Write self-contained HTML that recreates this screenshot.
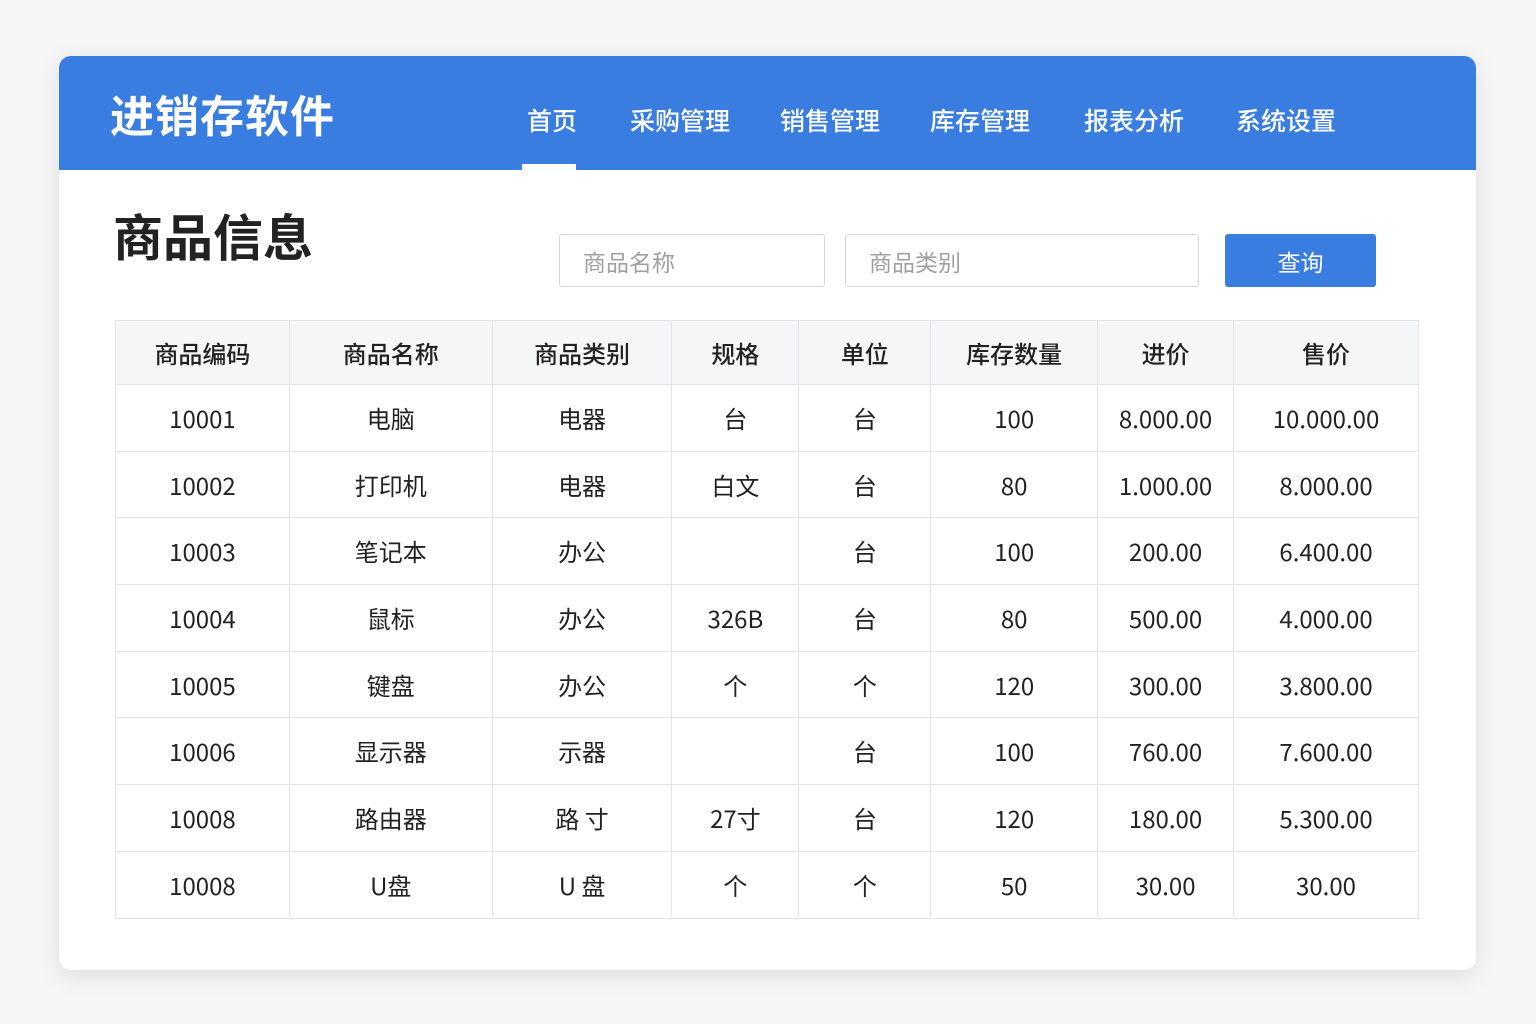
<!DOCTYPE html>
<html><head><meta charset="utf-8">
<style>
*{margin:0;padding:0;box-sizing:border-box}
body{width:1536px;height:1024px;background:#f6f6f6;font-family:"Noto Sans CJK SC","Liberation Sans",sans-serif;position:relative;overflow:hidden}
.card{position:absolute;left:59px;top:56px;width:1417px;height:914px;background:#fff;border-radius:12px;box-shadow:0 6px 24px rgba(0,0,0,.10);overflow:hidden}
.hdr{position:absolute;left:0;top:0;width:100%;height:114px;background:#3a7de0}
.logo{position:absolute;left:51px;top:28px;color:#fff;font-size:44px;font-weight:bold;letter-spacing:1px;line-height:58px}
.nav{position:absolute;top:46px;color:#fff;font-size:25px;line-height:36px;font-weight:500}
.ul{position:absolute;left:463px;top:108px;width:54px;height:6px;background:#fff}
h1{position:absolute;left:54px;top:146px;font-size:50px;line-height:66px;font-weight:bold;color:#222}
.inp{position:absolute;top:178px;height:53px;border:1px solid #d4d7dc;border-radius:3px;font-size:23px;color:#a0a0a0;padding-left:23px;line-height:53px}
.btn{position:absolute;left:1166px;top:178px;width:151px;height:53px;background:#3a7de0;border-radius:3px;color:#fff;font-size:23px;text-align:center;line-height:55px}
table{position:absolute;left:56px;top:264px;border-collapse:collapse;width:1304px;border:1px solid #e2e4e8}
td,th{border:1px solid #e2e4e8;text-align:center;font-size:24px;color:#222;font-weight:normal;height:66.7px;line-height:30px}
th{background:#f5f6f8;height:64px;font-weight:500}
</style></head><body>
<div class="card">
<div class="hdr">
<div class="logo">进销存软件</div>
<div class="nav" style="left:468px">首页</div>
<div class="nav" style="left:571px">采购管理</div>
<div class="nav" style="left:721px">销售管理</div>
<div class="nav" style="left:871px">库存管理</div>
<div class="nav" style="left:1025px">报表分析</div>
<div class="nav" style="left:1177px">系统设置</div>
<div class="ul"></div>
</div>
<h1>商品信息</h1>
<div class="inp" style="left:500px;width:266px">商品名称</div>
<div class="inp" style="left:786px;width:354px">商品类别</div>
<div class="btn">查询</div>
<table>
<colgroup><col style="width:174px"><col style="width:203px"><col style="width:180px"><col style="width:127px"><col style="width:132px"><col style="width:167px"><col style="width:136px"><col style="width:185px"></colgroup>
<tr><th>商品编码</th><th>商品名称</th><th>商品类别</th><th>规格</th><th>单位</th><th>库存数量</th><th>进价</th><th>售价</th></tr>
<tr><td>10001</td><td>电脑</td><td>电器</td><td>台</td><td>台</td><td>100</td><td>8.000.00</td><td>10.000.00</td></tr>
<tr><td>10002</td><td>打印机</td><td>电器</td><td>白文</td><td>台</td><td>80</td><td>1.000.00</td><td>8.000.00</td></tr>
<tr><td>10003</td><td>笔记本</td><td>办公</td><td></td><td>台</td><td>100</td><td>200.00</td><td>6.400.00</td></tr>
<tr><td>10004</td><td>鼠标</td><td>办公</td><td>326B</td><td>台</td><td>80</td><td>500.00</td><td>4.000.00</td></tr>
<tr><td>10005</td><td>键盘</td><td>办公</td><td>个</td><td>个</td><td>120</td><td>300.00</td><td>3.800.00</td></tr>
<tr><td>10006</td><td>显示器</td><td>示器</td><td></td><td>台</td><td>100</td><td>760.00</td><td>7.600.00</td></tr>
<tr><td>10008</td><td>路由器</td><td>路 寸</td><td>27寸</td><td>台</td><td>120</td><td>180.00</td><td>5.300.00</td></tr>
<tr><td>10008</td><td>U盘</td><td>U 盘</td><td>个</td><td>个</td><td>50</td><td>30.00</td><td>30.00</td></tr>
</table>
</div>
</body></html>
